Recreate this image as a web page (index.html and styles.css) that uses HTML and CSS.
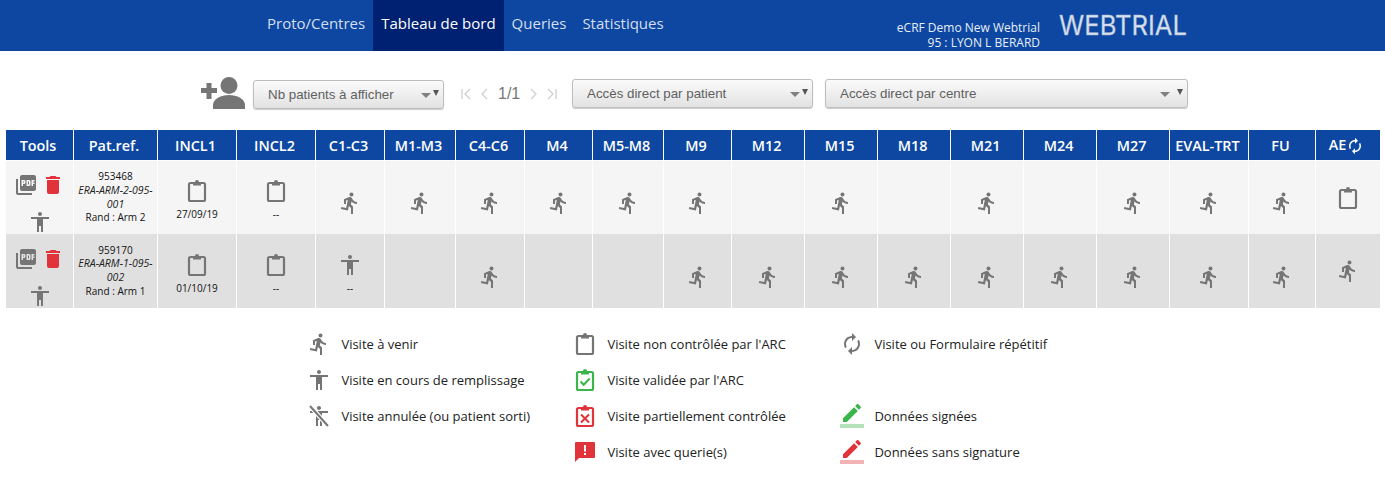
FILE: index.html
```html
<!DOCTYPE html>
<html lang="fr">
<head>
<meta charset="utf-8">
<title>Tableau de bord</title>
<link rel="stylesheet" href="styles.css">
</head>
<body>
<svg class="defs" aria-hidden="true">
  <symbol id="run" viewBox="0 0 24 24"><path d="M13.49 5.48c1.1 0 2-.9 2-2s-.9-2-2-2-2 .9-2 2 .9 2 2 2zm-3.6 13.9l1-4.4 2.1 2v6h2v-7.5l-2.1-2 .6-3c1.3 1.5 3.3 2.5 5.5 2.5v-2c-1.9 0-3.5-1-4.3-2.4l-1-1.6c-.4-.6-1-1-1.7-1-.3 0-.5.1-.8.1l-5.2 2.2v4.7h2v-3.4l1.8-.7-1.6 8.1-4.9-1-.4 2 7 1.4z"/></symbol>
  <symbol id="stand" viewBox="0 0 24 24"><path d="M12 2c1.1 0 2 .9 2 2s-.9 2-2 2-2-.9-2-2 .9-2 2-2zm9 7h-6v13h-2v-6h-2v6H9V9H3V7h18v2z"/></symbol>
  <symbol id="clip" viewBox="0 0 24 24"><rect x="4" y="4" width="16" height="18" rx="1.5" fill="none" stroke="currentColor" stroke-width="2.2"/><rect x="8" y="3" width="8" height="3.5"/><circle cx="12" cy="3" r="2"/></symbol>
  <symbol id="del" viewBox="0 0 24 24"><path d="M6 19c0 1.1.9 2 2 2h8c1.1 0 2-.9 2-2V7H6v12zM19 4h-3.5l-1-1h-5l-1 1H5v2h14V4z"/></symbol>
  <symbol id="pdf" viewBox="0 0 24 24"><path d="M20 2H8c-1.1 0-2 .9-2 2v12c0 1.1.9 2 2 2h12c1.1 0 2-.9 2-2V4c0-1.1-.9-2-2-2zm-8.5 7.5c0 .83-.67 1.5-1.5 1.5H9v2H7.5V7H10c.83 0 1.5.67 1.5 1.5v1zm5 2c0 .83-.67 1.5-1.5 1.5h-2.5V7H15c.83 0 1.5.67 1.5 1.5v3zm4-3H19v1h1.5V11H19v2h-1.5V7h3v1.5zM9 9.5h1v-1H9v1zM4 6H2v14c0 1.1.9 2 2 2h14v-2H4V6zm10 5.5h1v-3h-1v3z"/></symbol>
  <symbol id="renew" viewBox="0 0 24 24"><path d="M12 6v3l4-4-4-4v3c-4.42 0-8 3.58-8 8 0 1.57.46 3.03 1.24 4.26L6.7 14.8c-.45-.83-.7-1.79-.7-2.8 0-3.31 2.69-6 6-6zm6.76 1.74L17.3 9.2c.44.84.7 1.79.7 2.8 0 3.31-2.69 6-6 6v-3l-4 4 4 4v-3c4.42 0 8-3.58 8-8 0-1.57-.46-3.03-1.24-4.26z"/></symbol>
  <symbol id="pen" viewBox="0 0 24 28"><path d="M3 17.25V21h3.75L17.81 9.94l-3.75-3.75L3 17.25zM20.71 7.04c.39-.39.39-1.02 0-1.41l-2.34-2.34c-.39-.39-1.02-.39-1.41 0l-1.83 1.83 3.75 3.75 1.83-1.83z"/><rect y="23" width="24" height="4" opacity=".38"/></symbol>
</svg>

<header class="topbar">
  <nav class="nav">
    <a class="nav-item">Proto/Centres</a>
    <a class="nav-item active">Tableau de bord</a>
    <a class="nav-item">Queries</a>
    <a class="nav-item">Statistiques</a>
  </nav>
  <div class="study">eCRF Demo New Webtrial<br>95 : LYON L BERARD</div>
  <svg class="logo" viewBox="0 0 198 44" role="img" aria-label="Webtrial"><text x="1" y="32" textLength="128" lengthAdjust="spacingAndGlyphs">WEBTRIAL</text></svg>
</header>

<section class="toolbar">
  <svg class="add-user" viewBox="0 0 46 34"><rect x="1" y="11" width="16" height="5"/><rect x="6.5" y="6" width="5" height="16"/><circle cx="29" cy="8.5" r="8.5"/><path d="M13 32v-4c0-6 8-10 16-10s16 4 16 10v4z"/></svg>
  <div class="select s-nb"><span>Nb patients à afficher</span><i class="arrow"></i><i class="mini"></i></div>
  <div class="pager">
    <svg class="pg w12" viewBox="0 0 12 14"><path d="M2 2v10M10 2L5 7l5 5"/></svg>
    <svg class="pg w8" viewBox="0 0 8 14"><path d="M7 2L2 7l5 5"/></svg>
    <span class="page-num">1/1</span>
    <svg class="pg w8" viewBox="0 0 8 14"><path d="M1 2l5 5-5 5"/></svg>
    <svg class="pg w12" viewBox="0 0 12 14"><path d="M10 2v10M2 2l5 5-5 5"/></svg>
  </div>
  <div class="select s-pat"><span>Accès direct par patient</span><i class="arrow"></i><i class="mini"></i></div>
  <div class="select s-centre"><span>Accès direct par centre</span><i class="arrow"></i><i class="mini"></i></div>
</section>

<table class="grid">
  <colgroup>
    <col class="w68"><col class="w84"><col class="w79"><col class="w79"><col class="w69"><col class="w71"><col class="w69"><col class="w68"><col class="w71"><col class="w68"><col class="w73"><col class="w73"><col class="w73"><col class="w73"><col class="w73"><col class="w73"><col class="w79"><col class="w67"><col class="w64">
  </colgroup>
  <thead>
    <tr><th>Tools</th><th>Pat.ref.</th><th>INCL1</th><th>INCL2</th><th>C1-C3</th><th>M1-M3</th><th>C4-C6</th><th>M4</th><th>M5-M8</th><th>M9</th><th>M12</th><th>M15</th><th>M18</th><th>M21</th><th>M24</th><th>M27</th><th>EVAL-TRT</th><th>FU</th><th class="ae"><span>AE</span><svg class="ae-icon"><use href="#renew"/></svg></th></tr>
  </thead>
  <tbody>
    <tr class="r1">
      <td><div class="tools"><svg class="ic"><use href="#pdf"/></svg><svg class="ic red"><use href="#del"/></svg><svg class="ic"><use href="#stand"/></svg></div></td>
      <td class="ref">953468<br><em>ERA-ARM-2-095-001</em><br>Rand : Arm 2</td>
      <td class="stacked"><svg class="ic"><use href="#clip"/></svg><div class="cap">27/09/19</div></td>
      <td class="stacked"><svg class="ic"><use href="#clip"/></svg><div class="cap">--</div></td>
      <td class="low"><svg class="ic"><use href="#run"/></svg></td>
      <td class="low"><svg class="ic"><use href="#run"/></svg></td>
      <td class="low"><svg class="ic"><use href="#run"/></svg></td>
      <td class="low"><svg class="ic"><use href="#run"/></svg></td>
      <td class="low"><svg class="ic"><use href="#run"/></svg></td>
      <td class="low"><svg class="ic"><use href="#run"/></svg></td>
      <td></td>
      <td class="low"><svg class="ic"><use href="#run"/></svg></td>
      <td></td>
      <td class="low"><svg class="ic"><use href="#run"/></svg></td>
      <td></td>
      <td class="low"><svg class="ic"><use href="#run"/></svg></td>
      <td class="low"><svg class="ic"><use href="#run"/></svg></td>
      <td class="low"><svg class="ic"><use href="#run"/></svg></td>
      <td><svg class="ic"><use href="#clip"/></svg></td>
    </tr>
    <tr class="r2">
      <td><div class="tools"><svg class="ic"><use href="#pdf"/></svg><svg class="ic red"><use href="#del"/></svg><svg class="ic"><use href="#stand"/></svg></div></td>
      <td class="ref">959170<br><em>ERA-ARM-1-095-002</em><br>Rand : Arm 1</td>
      <td class="stacked"><svg class="ic"><use href="#clip"/></svg><div class="cap">01/10/19</div></td>
      <td class="stacked"><svg class="ic"><use href="#clip"/></svg><div class="cap">--</div></td>
      <td class="stacked"><svg class="ic"><use href="#stand"/></svg><div class="cap">--</div></td>
      <td></td>
      <td class="low"><svg class="ic"><use href="#run"/></svg></td>
      <td></td>
      <td></td>
      <td class="low"><svg class="ic"><use href="#run"/></svg></td>
      <td class="low"><svg class="ic"><use href="#run"/></svg></td>
      <td class="low"><svg class="ic"><use href="#run"/></svg></td>
      <td class="low"><svg class="ic"><use href="#run"/></svg></td>
      <td class="low"><svg class="ic"><use href="#run"/></svg></td>
      <td class="low"><svg class="ic"><use href="#run"/></svg></td>
      <td class="low"><svg class="ic"><use href="#run"/></svg></td>
      <td class="low"><svg class="ic"><use href="#run"/></svg></td>
      <td class="low"><svg class="ic"><use href="#run"/></svg></td>
      <td><svg class="ic"><use href="#run"/></svg></td>
    </tr>
  </tbody>
</table>

<section class="legend">
  <div class="lg-col c-a">
    <div class="lg-row"><svg class="ic"><use href="#run"/></svg><span>Visite à venir</span></div>
    <div class="lg-row"><svg class="ic"><use href="#stand"/></svg><span>Visite en cours de remplissage</span></div>
    <div class="lg-row"><svg class="ic" viewBox="0 0 24 24"><use href="#stand"/><path class="gap" d="M3 2l18 20"/><path class="slash" d="M3 2l18 20"/></svg><span>Visite annulée (ou patient sorti)</span></div>
  </div>
  <div class="lg-col c-b">
    <div class="lg-row"><svg class="ic"><use href="#clip"/></svg><span>Visite non contrôlée par l'ARC</span></div>
    <div class="lg-row"><svg class="ic green" viewBox="0 0 24 24"><use href="#clip"/><path class="mark" d="M7.5 13.5l3.2 3.2 6-6.2"/></svg><span>Visite validée par l'ARC</span></div>
    <div class="lg-row"><svg class="ic red" viewBox="0 0 24 24"><use href="#clip"/><path class="mark" d="M8 10.5l8 8M16 10.5l-8 8"/></svg><span>Visite partiellement contrôlée</span></div>
    <div class="lg-row"><svg class="ic red" viewBox="0 0 24 24"><path d="M3 2h18a1 1 0 0 1 1 1v14a1 1 0 0 1-1 1H6l-4 4V3a1 1 0 0 1 1-1z"/><rect class="cut" x="11" y="5" width="2" height="6.5"/><rect class="cut" x="11" y="13" width="2" height="2"/></svg><span>Visite avec querie(s)</span></div>
  </div>
  <div class="lg-col c-c">
    <div class="lg-row"><svg class="ic"><use href="#renew"/></svg><span>Visite ou Formulaire répétitif</span></div>
    <div class="lg-row"></div>
    <div class="lg-row"><svg class="ic pen green"><use href="#pen"/></svg><span>Données signées</span></div>
    <div class="lg-row"><svg class="ic pen red"><use href="#pen"/></svg><span>Données sans signature</span></div>
  </div>
</section>
</body>
</html>
```

FILE: styles.css
```css
* { box-sizing: border-box; }
html, body { margin: 0; padding: 0; background: #fff; }
body { font-family: "Open Sans", sans-serif; color: #111; width: 1385px; height: 488px; overflow: hidden; }
.defs { display: none; }

.topbar { display: flex; height: 51px; background: #0d47a1; color: #fff; }
.nav { display: flex; padding-left: 259px; width: 840px; }
.nav-item { padding: 0 8px; line-height: 47px; font-size: 15px; color: #d5dfef; white-space: nowrap; }
.nav-item.active { background: #002171; color: #fff; }
.study { width: 200px; margin-top: 20px; font-size: 12px; line-height: 15px; text-align: right; color: #e8eef8; }
.logo { width: 198px; height: 44px; margin: 3px 0 0 18px; }
.logo text { font-family: "Inter", sans-serif; font-size: 27px; font-weight: 400; fill: #d9e0eb; stroke: #9fb3d3; stroke-width: .4px; }

.toolbar { display: flex; align-items: flex-start; height: 79px; padding: 26px 0 0 200px; }
.add-user { width: 46px; height: 34px; fill: #757575; margin-right: 7px; }
.select { position: relative; height: 29px; margin-top: 2px; padding-left: 14px; border: 1px solid #bdbdbd; border-radius: 3px; background: linear-gradient(#fbfbfb, #e2e2e2); box-shadow: 0 1px 1px rgba(0,0,0,.2); font-family: "Liberation Sans", sans-serif; font-size: 13.33px; line-height: 28px; color: #616161; }
.s-nb { width: 191px; margin-top: 3px; }
.s-pat { width: 241px; }
.s-centre { width: 363px; margin-left: 12px; }
.arrow { position: absolute; right: 17px; top: 12px; border-left: 5px solid transparent; border-right: 5px solid transparent; border-top: 5px solid #808080; }
.s-nb .arrow, .s-pat .arrow { right: 12px; }
.mini { position: absolute; right: 4px; top: 9px; border-left: 3px solid transparent; border-right: 3px solid transparent; border-top: 6px solid #555; }
.pager { display: flex; align-items: center; height: 29px; margin-top: 2px; margin-left: 16px; width: 112px; }
.pg { height: 14px; fill: none; stroke: #d0d0d0; stroke-width: 1.3; }
.w12 { width: 12px; }
.w8 { width: 8px; margin: 0 8px; }
.page-num { font-family: "Liberation Sans", sans-serif; font-size: 16px; color: #777; margin: 0 2px; }

.grid { width: 1374px; margin-left: 6px; border-collapse: separate; border-spacing: 0; table-layout: fixed; }
.w64 { width: 64px; } .w67 { width: 67px; } .w68 { width: 68px; } .w69 { width: 69px; }
.w71 { width: 71px; } .w73 { width: 73px; } .w79 { width: 79px; } .w84 { width: 84px; }
.grid th { height: 31px; padding: 0 3px 0 0; background: #0d47a1; color: #fff; font-size: 14.4px; font-weight: 600; border-right: 1px solid #fff; border-bottom: 1px solid #fff; white-space: nowrap; }
.grid th:last-child, .grid td:last-child { border-right: 0; }
.grid td { padding: 0; border-right: 1px solid #fff; text-align: center; vertical-align: middle; font-size: 10px; line-height: 13.7px; }
.r1 td { height: 73px; background: #f5f5f5; }
.r2 td { height: 74px; background: #e0e0e0; }
.ae span { position: relative; top: -1px; }
.ae-icon { width: 18px; height: 18px; fill: #fff; margin-left: 0; vertical-align: -4px; }

.ic { display: block; width: 24px; height: 24px; fill: #757575; color: #757575; flex: none; }
.grid .ic { margin: 0 auto; }
.red { fill: #e0343a; color: #e0343a; }
.green { fill: #39b54a; color: #39b54a; }
.low { padding-top: 11px !important; }
.stacked { padding-top: 5px !important; }
.cap { margin-top: 4px; line-height: 14px; }
.tools { display: flex; flex-wrap: wrap; justify-content: flex-start; gap: 13px 3px; width: 54px; margin: 0 0 0 8px; padding-top: 12px; height: 73px; }
.grid .tools .ic { margin: 0; }
.grid .tools .ic:nth-child(3) { margin: 0 14px; }
.ref em { font-size: 10.5px; color: #222; }

.legend { display: flex; padding: 18px 0 0 307px; font-size: 13px; color: #222; }
.lg-col { display: flex; flex-direction: column; }
.c-a { width: 266px; }
.c-b { width: 267px; }
.lg-row { display: flex; align-items: center; gap: 10.4px; height: 36px; white-space: nowrap; }
.gap { fill: none; stroke: #fff; stroke-width: 4.5; }
.slash { fill: none; stroke: #757575; stroke-width: 2; }
.mark { fill: none; stroke: currentColor; stroke-width: 2; }
.cut { fill: #fff; }
.pen { height: 28px; margin-bottom: 2px; }
```
